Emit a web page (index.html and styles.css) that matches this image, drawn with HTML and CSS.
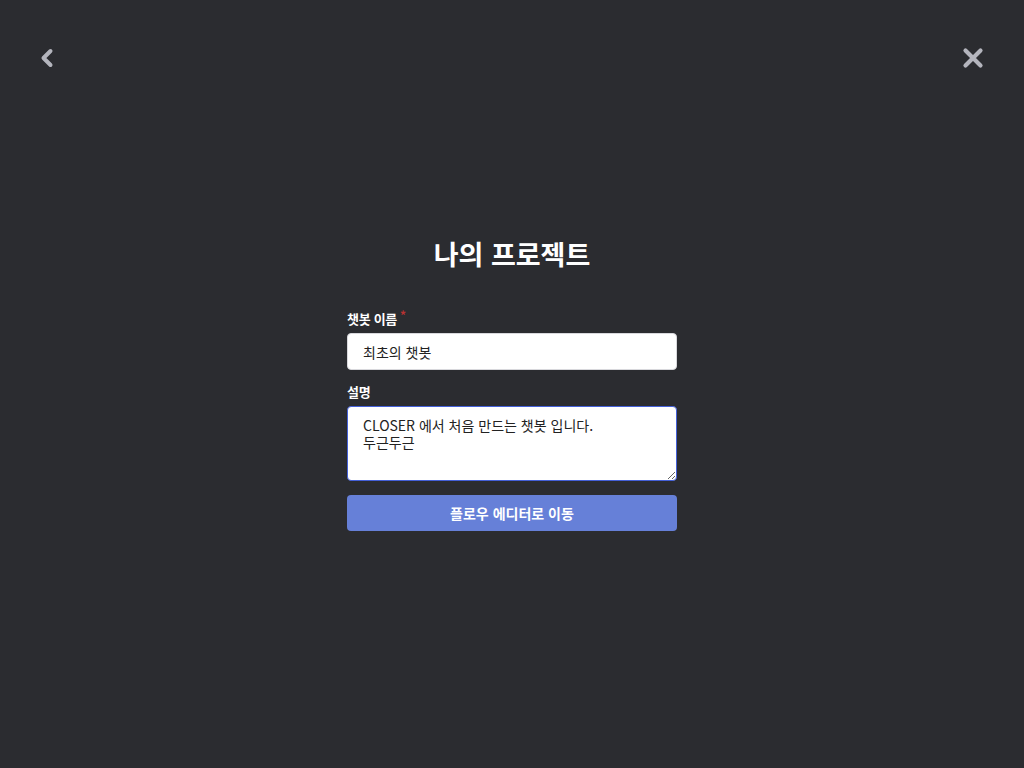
FILE: index.html
```html
<!DOCTYPE html>
<html lang="ko">
<head>
<meta charset="utf-8">
<link rel="stylesheet" href="styles.css">
</head>
<body>
<div class="page">
  <header class="topbar">
    <button class="icon-btn" aria-label="back">
      <svg width="16" height="20" viewBox="0 0 16 20"><path d="M10.5 3 L3.5 10 L10.5 17" fill="none" stroke="#b4b5bd" stroke-width="4" stroke-linecap="round" stroke-linejoin="round"/></svg>
    </button>
    <button class="icon-btn" aria-label="close">
      <svg width="22" height="22" viewBox="0 0 22 22"><path d="M3.5 3.5 L18.5 18.5 M18.5 3.5 L3.5 18.5" fill="none" stroke="#b4b5bd" stroke-width="4.2" stroke-linecap="round"/></svg>
    </button>
  </header>
  <main class="content">
    <h1 class="title">나의 프로젝트</h1>
    <form class="form">
      <label class="label">챗봇 이름<span class="req">*</span></label>
      <input class="input" type="text" value="최초의 챗봇">
      <label class="label second">설명</label>
      <textarea class="textarea">CLOSER 에서 처음 만드는 챗봇 입니다.
두근두근</textarea>
      <button type="button" class="submit">플로우 에디터로 이동</button>
    </form>
  </main>
</div>
</body>
</html>
```

FILE: styles.css
```css
* { box-sizing: border-box; }
html, body { margin: 0; padding: 0; }
body {
  background: #2b2c30;
  font-family: "Noto Sans CJK KR", "Noto Sans", sans-serif;
  color: #fff;
  width: 1024px;
  height: 768px;
  overflow: hidden;
}
.page { position: relative; height: 768px; }
.topbar {
  display: flex;
  justify-content: space-between;
  padding: 47px 40px 0 37px;
  height: 80px;
}
.icon-btn {
  background: none;
  border: none;
  padding: 0;
  width: 22px;
  height: 22px;
  display: flex;
  align-items: center;
  justify-content: center;
  cursor: pointer;
}
.content {
  display: flex;
  flex-direction: column;
  align-items: center;
  padding-top: 159px;
}
.title {
  margin: 0;
  font-size: 27px;
  font-weight: 700;
  line-height: 30px;
  letter-spacing: 0;
}
.form {
  width: 330px;
  display: flex;
  flex-direction: column;
  margin-top: 41px;
}
.label {
  font-size: 13px;
  font-weight: 700;
  line-height: 18px;
  margin-bottom: 5px;
  letter-spacing: -0.3px;
}
.label.second { margin-top: 13px; }
.req {
  color: #b83232;
  font-size: 12px;
  vertical-align: top;
  margin-left: 3px;
  position: relative;
  top: -4px;
}
.input, .textarea {
  font-family: "Noto Sans CJK KR", "Noto Sans", sans-serif;
  font-size: 14px;
  color: #222;
  background: #fff;
  border: 1px solid #d8d8dc;
  border-radius: 4px;
  padding: 0 15px;
  outline: none;
}
.input { height: 37px; }
.textarea {
  height: 75px;
  padding: 10px 15px 9px;
  line-height: 17px;
  resize: vertical;
  border-color: #4460d8;
}
.submit {
  margin-top: 14px;
  height: 36px;
  border: none;
  border-radius: 4px;
  background: #6680d8;
  color: #fff;
  font-family: "Noto Sans CJK KR", "Noto Sans", sans-serif;
  font-size: 14px;
  font-weight: 700;
  cursor: pointer;
}
```
